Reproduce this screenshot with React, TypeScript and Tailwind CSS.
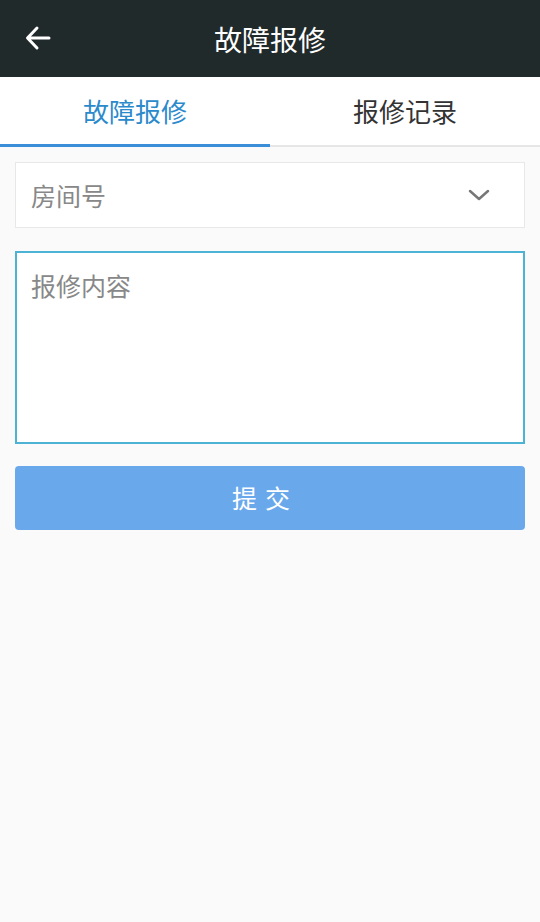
import React from "react";

export default function App() {
  const font = { fontFamily: '"Noto Sans CJK SC", "Noto Sans", sans-serif' };
  return (
    <div className="w-[540px] min-h-[922px] bg-[#fafafa] flex flex-col" style={font}>
      <div className="h-[77px] bg-[#212a2b] relative flex items-center justify-center shrink-0">
        <svg className="absolute left-[24px] top-[24px]" width="28" height="28" viewBox="0 0 28 28" fill="none" stroke="white" strokeWidth="3" strokeLinecap="round" strokeLinejoin="round">
          <path d="M25 14H4M13 4L3.5 14L13 24" />
        </svg>
        <span className="text-white text-[28px] leading-none">故障报修</span>
      </div>
      <div className="h-[70px] bg-white flex shrink-0">
        <div className="flex-1 flex items-center justify-center border-b-[3px] border-[#3a8fd8] text-[#2b8acb] text-[26px] leading-none">
          故障报修
        </div>
        <div className="flex-1 flex items-center justify-center border-b-2 border-[#e6e6e6] text-[#333] text-[26px] leading-none">
          报修记录
        </div>
      </div>
      <div className="px-[15px] pt-[15px] flex flex-col">
        <div className="h-[66px] bg-white border border-[#e8e8e8] flex items-center justify-between pl-[15px] pr-[34px]">
          <span className="text-[#888] text-[25px] leading-none">房间号</span>
          <svg width="22" height="12" viewBox="0 0 22 12" fill="none" stroke="#777" strokeWidth="2.5" strokeLinecap="round" strokeLinejoin="round">
            <path d="M2 2L11 10L20 2" />
          </svg>
        </div>
        <div className="mt-[23px] h-[193px] bg-white border-2 border-[#4cb3d4] pl-[14px] pt-[20px]">
          <span className="text-[#888] text-[25px] leading-none">报修内容</span>
        </div>
        <button className="mt-[22px] h-[64px] rounded-[4px] bg-[#6aa8ec] text-white text-[25px] tracking-[8px] flex items-center justify-center pr-[10px]">
          提交
        </button>
      </div>
    </div>
  );
}
